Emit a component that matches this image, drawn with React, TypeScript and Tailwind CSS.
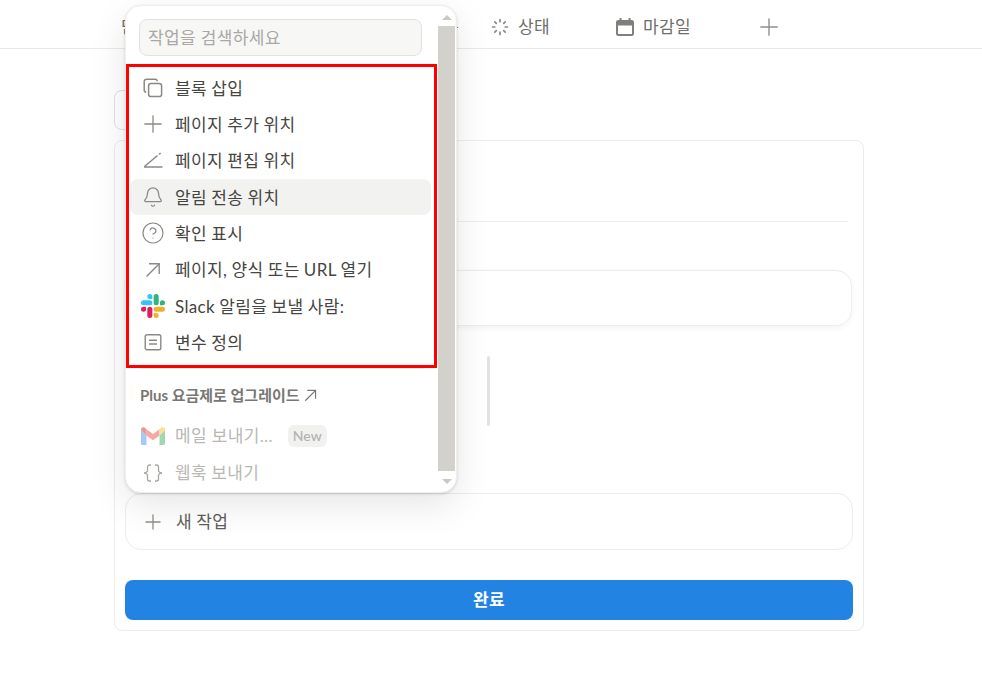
import { Bell, CircleHelp, Plus } from 'lucide-react';
import type { ReactNode } from 'react';

const FONT = 'font-["Lato","Noto_Sans_CJK_KR",sans-serif]';

function CopyIcon() {
  return (
    <svg width="20" height="20" viewBox="0 0 20 20" fill="none" stroke="#8a8985" strokeWidth="1.5">
      <rect x="5.6" y="5.6" width="13" height="13" rx="2.4" />
      <path d="M3.2 14.2A2.2 2.2 0 0 1 1.2 12V3.6a2.4 2.4 0 0 1 2.4-2.4H12a2.2 2.2 0 0 1 2.2 2" />
    </svg>
  );
}

function PenLineIcon() {
  return (
    <svg width="20" height="20" viewBox="0 0 20 20" fill="none" stroke="#8a8985" strokeWidth="1.5">
      <path d="M1 16h18.5" />
      <path d="M1.5 15.5 14.5 4.5" />
      <path d="M16 3.4l1.6-1.3" />
    </svg>
  );
}

function NoteIcon() {
  return (
    <svg width="18" height="18" viewBox="0 0 18 18" fill="none" stroke="#8a8985" strokeWidth="1.4">
      <rect x="1.2" y="1.7" width="15.6" height="15" rx="1.8" />
      <path d="M5 7.2h8M5 11h8" />
    </svg>
  );
}

function CalendarIcon() {
  return (
    <svg width="20" height="20" viewBox="0 0 20 20" fill="#807f7b">
      <path d="M4.5 1h2v2h7V1h2v2h1.2A2.3 2.3 0 0 1 19 5.3v11.4a2.3 2.3 0 0 1-2.3 2.3H3.3A2.3 2.3 0 0 1 1 16.7V5.3A2.3 2.3 0 0 1 3.3 3h1.2V1ZM3 8.5v8.2c0 .2.1.3.3.3h13.4c.2 0 .3-.1.3-.3V8.5H3Z" />
    </svg>
  );
}

function StatusIcon() {
  return (
    <svg width="20" height="20" viewBox="0 0 20 20" fill="none" stroke="#8a8985" strokeWidth="1.7" strokeLinecap="round">
      <path d="M10 2.6v2.2M10 15.2v2.2M2.6 10h2.2M15.2 10h2.2M4.8 4.8l1.5 1.5M13.7 13.7l1.5 1.5M4.8 15.2l1.5-1.5M13.7 6.3l1.5-1.5" />
    </svg>
  );
}

function ArrowIcon({ size, stroke = 1.4 }: { size: number; stroke?: number }) {
  return (
    <svg width={size} height={size} viewBox="0 0 16 16" fill="none" stroke="currentColor" strokeWidth={stroke}>
      <path d="M1.5 14.5 14 2" />
      <path d="M4 1.8h10.2V12" />
    </svg>
  );
}

function BracesIcon() {
  return (
    <svg width="20" height="18" viewBox="0 0 20 18" fill="none" stroke="#a8a7a3" strokeWidth="1.3">
      <path d="M8 1H6.500a2 2 0 0 0-2 2v3.600c0 1.200-1.600 2.400-3.500 2.400 1.900 0 3.500 1.200 3.500 2.400V15a2 2 0 0 0 2 2H8" />
      <path d="M12 1h1.500a2 2 0 0 1 2 2v3.600c0 1.200 1.600 2.400 3.500 2.400-1.900 0-3.500 1.200-3.500 2.400V15a2 2 0 0 1-2 2H12" />
    </svg>
  );
}

function SlackIcon() {
  return (
    <svg width="24" height="24" viewBox="0 0 122.8 122.8">
      <path fill="#e01e5a" d="M25.8 77.6a12.9 12.9 0 1 1-12.9-12.9h12.9v12.9Zm6.5 0a12.9 12.9 0 0 1 25.8 0v32.3a12.9 12.9 0 0 1-25.8 0V77.6Z" />
      <path fill="#36c5f0" d="M45.2 25.8a12.9 12.9 0 1 1 12.9-12.9v12.9H45.2Zm0 6.5a12.9 12.9 0 0 1 0 25.8H12.9a12.9 12.9 0 0 1 0-25.8h32.3Z" />
      <path fill="#2eb67d" d="M97 45.2a12.9 12.9 0 1 1 12.9 12.9H97V45.2Zm-6.5 0a12.9 12.9 0 0 1-25.8 0V12.9a12.9 12.9 0 0 1 25.8 0v32.3Z" />
      <path fill="#ecb22e" d="M77.6 97a12.9 12.9 0 1 1-12.9 12.9V97h12.9Zm0-6.5a12.9 12.9 0 0 1 0-25.8h32.3a12.9 12.9 0 0 1 0 25.8H77.6Z" />
    </svg>
  );
}

function GmailIcon() {
  return (
    <svg width="24" height="18" viewBox="0 0 24 18" className="opacity-45">
      <path fill="#4285f4" d="M0 3.2v13.2C0 17.3.7 18 1.600 18h3.900V8.400L0 3.200Z" />
      <path fill="#34a853" d="M18.500 8.400V18h3.900c.9 0 1.600-.7 1.600-1.600V3.200l-5.500 5.200Z" />
      <path fill="#ea4335" d="M5.500 8.400 12 13.200l6.500-4.800V2.200L12 7 5.500 2.200v6.200Z" />
      <path fill="#c5221f" d="M0 2.400v.8l5.500 5.200V2.200L3.800.8C2.300-.3 0 .6 0 2.400Z" />
      <path fill="#fbbc04" d="M18.500 2.200v6.200L24 3.200v-.8c0-1.800-2.300-2.700-3.800-1.600l-1.700 1.400Z" />
    </svg>
  );
}

function MenuItem({ icon, label, active }: { icon: ReactNode; label: string; active?: boolean }) {
  return (
    <div className={`flex h-[36.3px] items-center rounded-lg ${active ? 'bg-[#f2f2f1]' : ''}`}>
      <div className="flex w-[45px] shrink-0 justify-center">{icon}</div>
      <span className="pt-[1px] text-[17px] tracking-[0.36px] [word-spacing:-0.5px] text-[#464541] whitespace-nowrap">{label}</span>
    </div>
  );
}

export default function App() {
  return (
    <div className={`relative h-[684px] w-[982px] overflow-hidden bg-white ${FONT}`}>
      {/* Tabs */}
      <div className="flex h-[49px] items-center border-b border-[#e9e9e7] pl-[121px] pt-[6px] text-[17px] tracking-[0.36px] text-[#6f6e69]">
        <div className="flex w-[369px] justify-between pr-[31px]">
          <span>담당자</span>
          <span>작업 이름</span>
        </div>
        <div className="flex w-[125px] items-center gap-2">
          <StatusIcon />
          <span>상태</span>
        </div>
        <div className="flex w-[140px] items-center gap-2">
          <CalendarIcon />
          <span>마감일</span>
        </div>
        <Plus size={28} strokeWidth={1.2} className="text-[#8f8e8a]" />
      </div>

      {/* Page behind the menu */}
      <div className="ml-[114px] w-[750px] pt-[41px]">
        <div className="h-10 w-[120px] rounded-lg border border-[#e3e2e0]" />
        <div className="mt-[10px] flex h-[491px] flex-col rounded-lg border border-[#ececeb] px-[10px] pt-[80px]">
          <div className="mr-[5px] h-px shrink-0 bg-[#ededec]" />
          <div className="mt-[48px] mr-px h-14 shrink-0 rounded-2xl border border-[#ededec] shadow-[0_2px_6px_rgba(0,0,0,0.05)]" />
          <div className="mt-[30px] ml-[362px] h-[70px] w-[3px] shrink-0 rounded-sm bg-[#e3e2e0]" />
          <div className="mt-[67px] flex h-[57px] shrink-0 items-center rounded-2xl border border-[#ededec] pl-[15px]">
            <Plus size={24} strokeWidth={1.3} className="text-[#8f8e8a]" />
            <span className="ml-[11px] text-[17px] tracking-[0.36px] [word-spacing:-0.5px] text-[#5f5e5a]">새 작업</span>
          </div>
          <button className="mt-[30px] flex h-10 shrink-0 items-center justify-center rounded-lg bg-[#2383e2] text-[17px] font-bold tracking-[0.36px] text-white">
            완료
          </button>
        </div>
      </div>

      {/* Action menu */}
      <div className="absolute left-[125px] top-[5px] flex h-[488px] w-[332px] overflow-hidden rounded-2xl border border-[#efefed] bg-white shadow-[0_1px_3px_rgba(0,0,0,0.14),0_12px_36px_rgba(0,0,0,0.1)]">
        <div className="min-w-0 flex-1 px-[4px] pt-[13px]">
          <input
            readOnly
            placeholder="작업을 검색하세요"
            className="ml-[9px] block h-[37px] w-[283px] rounded-lg border border-[#e3e2e0] bg-[#f7f7f5] px-2 text-[17px] tracking-[0.36px] outline-none placeholder:text-[#a9a8a4]"
          />
          <div className="mt-[14px] mr-[3px]">
            <MenuItem icon={<CopyIcon />} label="블록 삽입" />
            <MenuItem icon={<Plus size={28} strokeWidth={1.1} className="text-[#8a8985]" />} label="페이지 추가 위치" />
            <MenuItem icon={<PenLineIcon />} label="페이지 편집 위치" />
            <MenuItem active icon={<Bell size={22} strokeWidth={1.4} className="text-[#8a8985]" />} label="알림 전송 위치" />
            <MenuItem icon={<CircleHelp size={24} strokeWidth={1.2} className="text-[#8a8985]" />} label="확인 표시" />
            <MenuItem icon={<span className="text-[#8a8985]"><ArrowIcon size={16} /></span>} label="페이지, 양식 또는 URL 열기" />
            <MenuItem icon={<SlackIcon />} label="Slack 알림을 보낼 사람:" />
            <MenuItem icon={<NoteIcon />} label="변수 정의" />
          </div>
          <div className="mx-[10px] mt-[8px] h-px bg-[#ededec]" />
          <div className="mt-[15px] flex items-center gap-[4px] pl-[10px] text-[15px] font-bold text-[#787774]">
            <span>Plus 요금제로 업그레이드</span>
            <ArrowIcon size={13} stroke={1.5} />
          </div>
          <div className="mt-[11px] flex h-[36.3px] items-center">
            <div className="flex w-[45px] shrink-0 justify-center">
              <GmailIcon />
            </div>
            <span className="text-[17px] tracking-[0.36px] text-[#b9b8b5]">메일 보내기...</span>
            <span className="ml-[15px] rounded-md bg-[#f1f1f0] px-[5px] py-[1px] text-sm font-medium text-[#b3b2af]">New</span>
          </div>
          <div className="flex h-[37px] items-center">
            <div className="flex w-[45px] shrink-0 justify-center">
              <BracesIcon />
            </div>
            <span className="text-[17px] tracking-[0.36px] [word-spacing:-0.5px] text-[#b9b8b5]">웹훅 보내기</span>
          </div>
        </div>

        {/* Scrollbar */}
        <div className="flex w-[18px] shrink-0 flex-col items-start">
          <div className="flex h-[20px] w-[17px] items-center justify-center pt-[3px]">
            <div className="h-0 w-0 border-x-[5px] border-b-[5px] border-x-transparent border-b-[#c9c8c3]" />
          </div>
          <div className="h-[445px] w-[17px] bg-[#d2d1cb]" />
          <div className="flex h-[20px] w-[17px] items-center justify-center">
            <div className="h-0 w-0 border-x-[5px] border-t-[5px] border-x-transparent border-t-[#c9c8c3]" />
          </div>
        </div>
      </div>

      {/* Red annotation */}
      <div className="pointer-events-none absolute left-[126px] top-[64px] h-[304px] w-[311px] border-[3px] border-[#ff0000]" />
    </div>
  );
}
